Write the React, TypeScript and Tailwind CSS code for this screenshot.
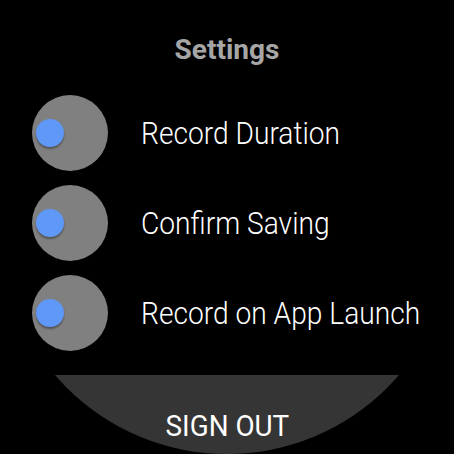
import React from "react";

const items = ["Record Duration", "Confirm Saving", "Record on App Launch"];

function Toggle() {
  return (
    <div className="w-[76px] h-[76px] rounded-full bg-[#808080] flex items-center pl-[4px] shrink-0">
      <div className="w-[28px] h-[28px] rounded-full bg-[#5f98f7] shadow-[0_2px_2px_rgba(0,0,0,0.35)]" />
    </div>
  );
}

export default function App() {
  return (
    <div className="w-[454px] h-[454px] bg-black">
      <div className="w-[454px] h-[454px] bg-black overflow-hidden rounded-full flex flex-col" style={{ fontFamily: "Roboto, 'Liberation Sans', sans-serif" }}>
        <div className="h-[88px] flex justify-center pt-[34px]">
          <span className="text-[28px] leading-[32px] font-bold text-[#a6a6a6]">Settings</span>
        </div>
        {items.map((t) => (
          <div key={t} className="h-[90px] flex items-center pl-[32px] gap-[33px]">
            <Toggle />
            <span className="inline-block text-[32px] leading-[40px] font-light text-white whitespace-nowrap origin-left scale-x-[0.88]">{t}</span>
          </div>
        ))}
        <div className="mt-[17px] flex-1 bg-[#353535] flex justify-center pt-[34px]">
          <span className="inline-block text-[29px] leading-[34px] font-normal text-white scale-x-[0.96]">SIGN OUT</span>
        </div>
      </div>
    </div>
  );
}
